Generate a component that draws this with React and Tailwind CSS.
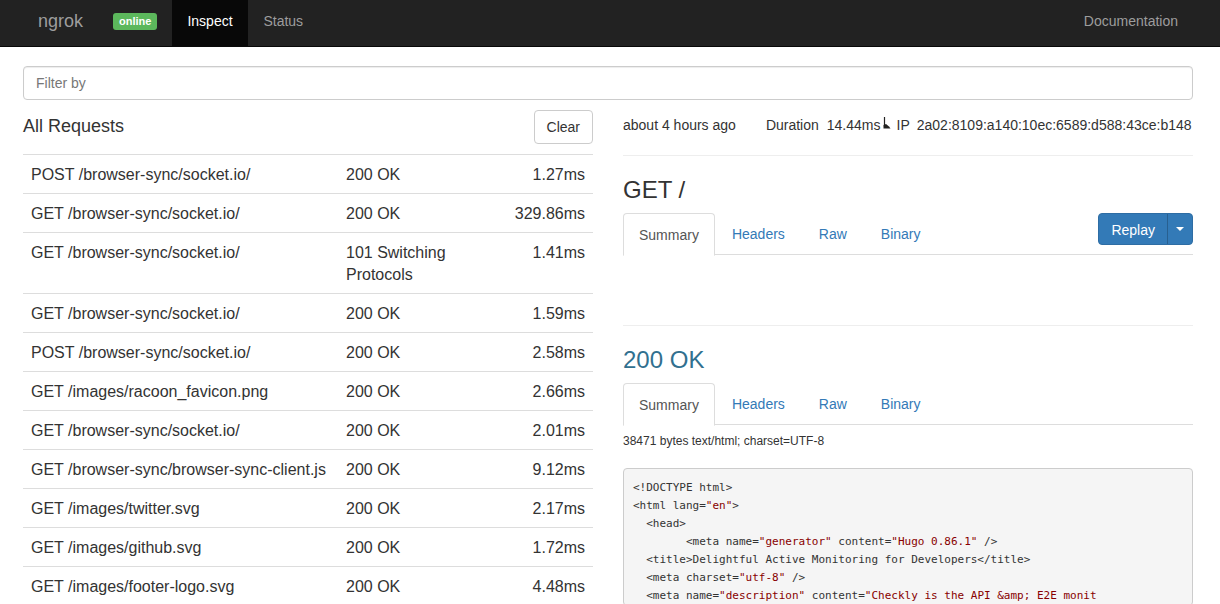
import React from 'react';

const requests = [
  ['POST /browser-sync/socket.io/', '200 OK', '1.27ms'],
  ['GET /browser-sync/socket.io/', '200 OK', '329.86ms'],
  ['GET /browser-sync/socket.io/', '101 Switching Protocols', '1.41ms'],
  ['GET /browser-sync/socket.io/', '200 OK', '1.59ms'],
  ['POST /browser-sync/socket.io/', '200 OK', '2.58ms'],
  ['GET /images/racoon_favicon.png', '200 OK', '2.66ms'],
  ['GET /browser-sync/socket.io/', '200 OK', '2.01ms'],
  ['GET /browser-sync/browser-sync-client.js', '200 OK', '9.12ms'],
  ['GET /images/twitter.svg', '200 OK', '2.17ms'],
  ['GET /images/github.svg', '200 OK', '1.72ms'],
  ['GET /images/footer-logo.svg', '200 OK', '4.48ms'],
];

const Tabs = () => (
  <div className="flex border-b border-[#ddd] h-[42px]">
    <div className="px-[15px] h-[43px] flex items-center bg-white border border-[#ddd] border-b-white rounded-t-[4px] text-[#555] mr-[2px]">
      Summary
    </div>
    {['Headers', 'Raw', 'Binary'].map((t) => (
      <div key={t} className="px-[15px] flex items-center text-[#337ab7] mr-[4px]">
        {t}
      </div>
    ))}
  </div>
);

const S = ({ children }) => <span className="text-[#880000]">{children}</span>;

export default function App() {
  return (
    <div className="h-[604px] bg-white text-[#333] text-[14px] leading-[20px] overflow-hidden" style={{ fontFamily: '"Liberation Sans", Arial, sans-serif' }}>
      {/* navbar */}
      <div className="h-[47px] bg-[#222] border-b border-[#080808] flex items-stretch pl-[23px] pr-[27px]">
        <div className="flex items-center pb-[4px] pl-[15px] pr-[30px] text-[18px] text-[#9d9d9d]">ngrok</div>
        <div className="flex items-center pb-[4px] pr-[15px]">
          <span className="bg-[#5cb85c] text-white text-[11px] font-bold leading-[17px] px-[6px] rounded-[3px]">online</span>
        </div>
        <div className="flex items-center pb-[4px] px-[15px] w-[76px] bg-[#080808] text-white">Inspect</div>
        <div className="flex items-center pb-[4px] px-[15px] text-[#9d9d9d]">Status</div>
        <div className="flex-1" />
        <div className="flex items-center pb-[4px] px-[15px] text-[#9d9d9d]">Documentation</div>
      </div>

      <div className="pl-[23px] pr-[27px]">
        {/* filter */}
        <div className="mt-[19px] h-[34px] border border-[#ccc] rounded-[4px] flex items-center px-[12px] text-[#777] shadow-[inset_0_1px_1px_rgba(0,0,0,0.075)]">
          Filter by
        </div>

        <div className="flex gap-[30px] mt-[10px]">
          {/* left */}
          <div className="w-[570px] shrink-0">
            <div className="flex items-center justify-between h-[34px]">
              <div className="text-[18px] -mt-[2px]">All Requests</div>
              <div className="h-[34px] px-[12px] flex items-center border border-[#ccc] rounded-[4px] bg-white">Clear</div>
            </div>
            <div className="mt-[10px] text-[16px] leading-[22px]">
              {requests.map(([p, s, d], i) => (
                <div key={i} className="flex border-t border-[#ddd] pt-[9px] pb-[7px] px-[8px]">
                  <div className="w-[315px]">{p}</div>
                  <div className="w-[130px]">{s}</div>
                  <div className="flex-1 text-right">{d}</div>
                </div>
              ))}
            </div>
          </div>

          {/* right */}
          <div className="w-[570px] shrink-0">
            <div className="flex items-center h-[20px] mt-[5px] whitespace-nowrap">
              <span className="shrink-0">about 4 hours ago</span>
              <span className="shrink-0 ml-[30px]">Duration</span>
              <span className="shrink-0 ml-[8px]">14.44ms</span>
              <svg width="9" height="12" viewBox="0 0 9 12" className="shrink-0 ml-[1px] -mt-[4px]">
                <path d="M2.5 0 V10" stroke="#222" strokeWidth="1.2" />
                <path d="M1.5 11.5 L1.5 8 L4 7 L7 9.5 L8.5 11.5 Z" fill="#222" />
              </svg>
              <span className="shrink-0 ml-[6px]">IP</span>
              <span className="shrink-0 ml-[7px]">2a02:8109:a140:10ec:6589:d588:43ce:b148</span>
            </div>
            <div className="mt-[20px] border-t border-[#eee]" />
            <div className="mt-[21px] text-[24px] leading-[26px]">GET /</div>
            <div className="mt-[10px] relative">
              <Tabs />
              <div className="absolute right-0 top-0 flex h-[32px] rounded-[4px] bg-[#337ab7] text-white border border-[#2e6da4]">
                <div className="px-[12px] flex items-center pt-[1px]">Replay</div>
                <div className="w-[25px] flex items-center justify-center border-l border-[#286090]">
                  <svg width="8" height="4" viewBox="0 0 8 4"><path d="M0 0 H8 L4 4 Z" fill="white" /></svg>
                </div>
              </div>
            </div>
            <div className="h-[70px]" />
            <div className="border-t border-[#eee]" />
            <div className="mt-[21px] text-[24px] leading-[26px] text-[#31708f]">200 OK</div>
            <div className="mt-[10px]">
              <Tabs />
            </div>
            <div className="mt-[9px] text-[12px] leading-[14px]">38471 bytes text/html; charset=UTF-8</div>
            <div
              className="mt-[20px] bg-[#f5f5f5] border border-[#ccc] rounded-[4px] px-[9px] pt-[10px] pb-0 text-[11px] leading-[18px] whitespace-pre text-[#333] overflow-hidden"
              style={{ fontFamily: '"DejaVu Sans Mono", monospace' }}
            >
              <div>{'<!DOCTYPE html>'}</div>
              <div>{'<html lang='}<S>"en"</S>{'>'}</div>
              <div>{'  <head>'}</div>
              <div>{'        <meta name='}<S>"generator"</S>{' content='}<S>"Hugo 0.86.1"</S>{' />'}</div>
              <div>{'  <title>Delightful Active Monitoring for Developers</title>'}</div>
              <div>{'  <meta charset='}<S>"utf-8"</S>{' />'}</div>
              <div>{'  <meta name='}<S>"description"</S>{' content='}<S>{'"Checkly is the API &amp; E2E monit'}</S></div>
            </div>
          </div>
        </div>
      </div>
    </div>
  );
}
